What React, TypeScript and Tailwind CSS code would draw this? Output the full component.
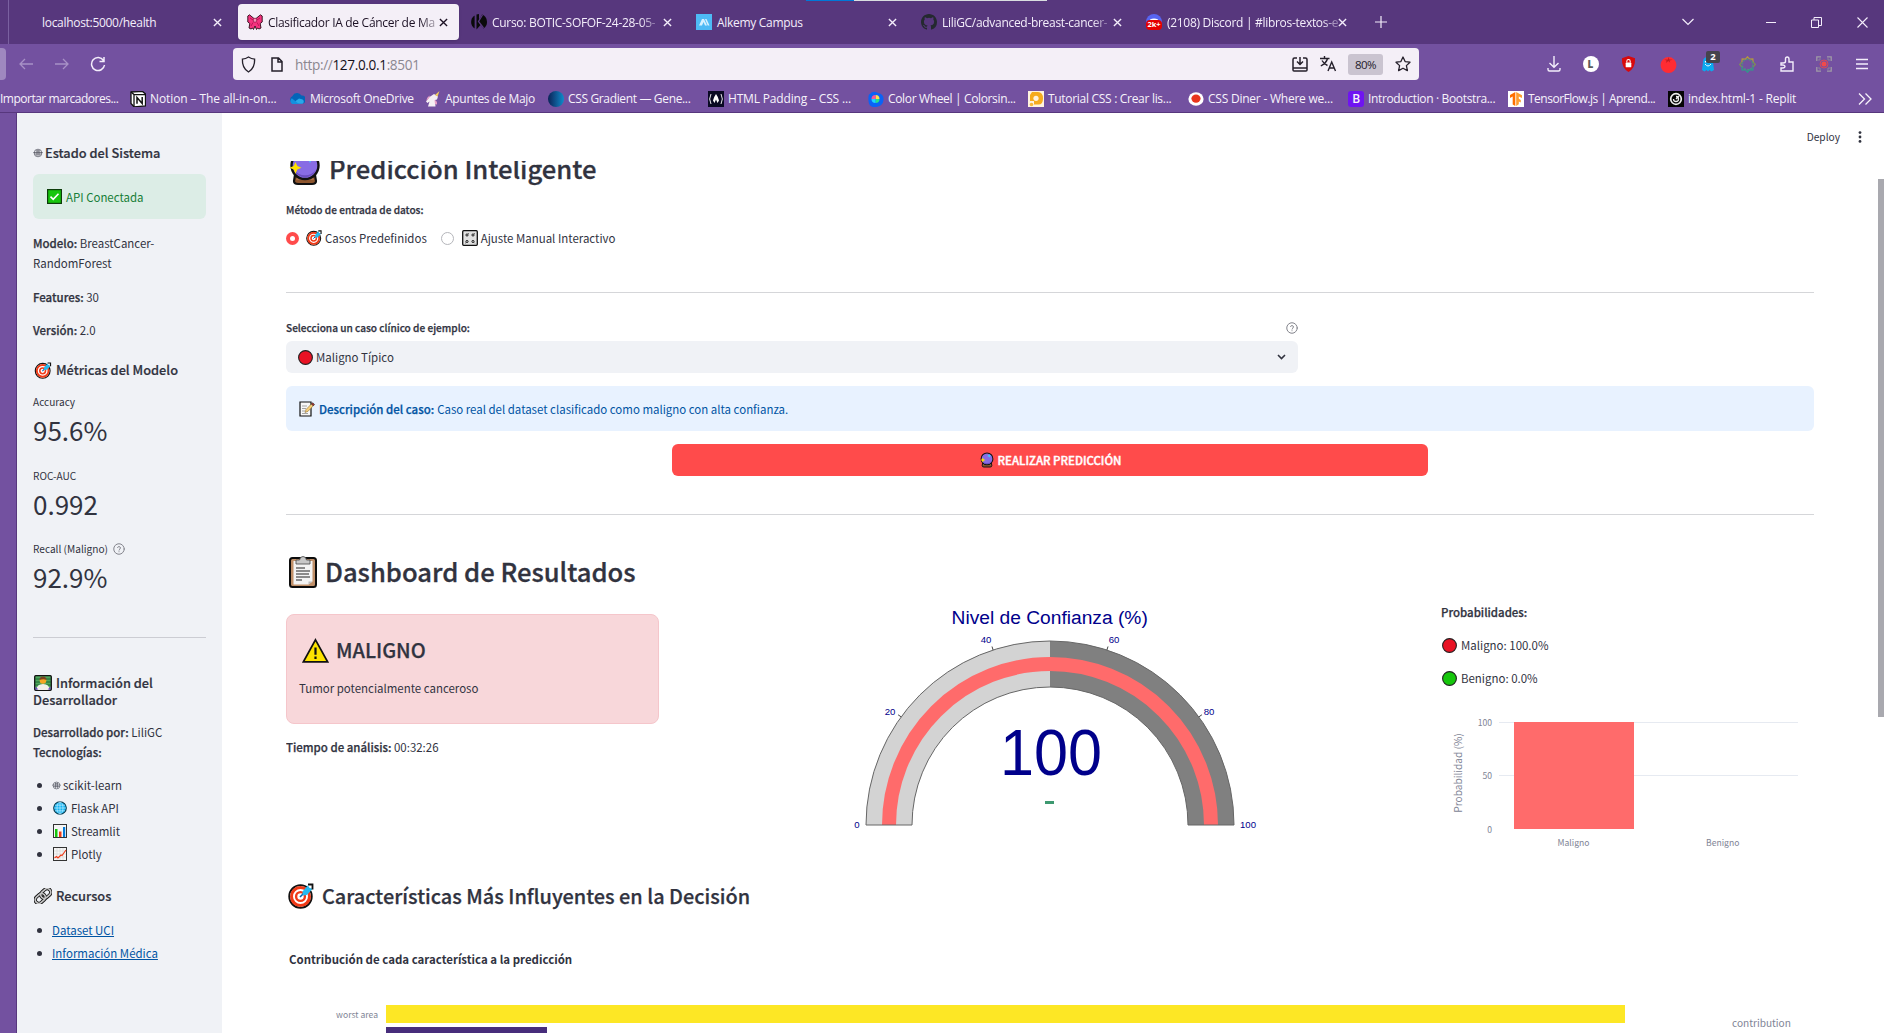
import React from "react";

type IconProps = { className?: string };

/* ---------- pictograms ---------- */

const Target = ({ className = "" }: IconProps) => (
  <svg viewBox="0 0 26 26" className={className}>
    <circle cx="12.5" cy="13.5" r="11.3" fill="#fff" stroke="#111" strokeWidth="1.8" />
    <circle cx="12.5" cy="13.5" r="9" fill="none" stroke="#f03a17" strokeWidth="3" />
    <circle cx="12.5" cy="13.5" r="4.4" fill="#fff" stroke="#f03a17" strokeWidth="2.4" />
    <path d="M12 14l7-7" stroke="#0063b1" strokeWidth="1.6" />
    <path d="M14.5 8.5L20 2.2l1.2 2.6 3.4 1-5.6 6.2-4.2.4z" fill="#26b9ef" />
    <path d="M20 1.5h4.500v5" fill="none" stroke="#111" strokeWidth="1.8" />
  </svg>
);

const CrystalBall = ({ className = "" }: IconProps) => (
  <svg viewBox="0 0 32 36" className={className}>
    <path d="M6 25l-1 6q0 3 4 3h14q4 0 4-3l-1-6z" fill="#8e562e" stroke="#111" strokeWidth="2.2" />
    <path d="M9 27h14l2 2.500H7z" fill="#c98a5a" />
    <circle cx="16" cy="15.5" r="13.5" fill="#886ce4" stroke="#111" strokeWidth="2.4" />
    <path d="M5 20a12 12 0 0022 0 14 14 0 01-22 0z" fill="#6b4fc0" />
    <path d="M21 4l1.400 3.200L26 8.600l-3.600 1.400L21 13l-1.400-3L16 8.600l3.600-1.400z" fill="#3fd0ff" />
    <path d="M6.500 12l1.800 4 4.200 1.800-4.200 1.800-1.800 4.200-1.800-4.200L.5 17.800l4.200-1.800z" fill="#ffe100" />
  </svg>
);

const Clipboard = ({ className = "" }: IconProps) => (
  <svg viewBox="0 0 28 33" className={className}>
    <rect x="1" y="3" width="26" height="29" rx="2.500" fill="#c19069" stroke="#0c0c0c" strokeWidth="2" />
    <path d="M4.500 6h19v20.500l-4 3h-15z" fill="#f4f4f4" />
    <path d="M19.500 29.500v-3h4z" fill="#bbb" />
    <path d="M7 9V5h3.500q.5-3.500 3.500-3.500T17.500 5H21v4z" fill="#c8c8c8" stroke="#444" strokeWidth=".8" />
    <path d="M7 13h9M7 16h14M7 19h13M7 22h14M7 25h6" stroke="#222" strokeWidth="1.100" />
  </svg>
);

const Warning = ({ className = "" }: IconProps) => (
  <svg viewBox="0 0 27 25" className={className}>
    <path d="M13.500 1.800L25.600 23.800H1.400z" fill="#fde300" stroke="#111" strokeWidth="1.700" />
    <path d="M13.500 9.500v7.300M13.500 18.600v2.400" stroke="#111" strokeWidth="2.200" />
  </svg>
);

const Check = ({ className = "" }: IconProps) => (
  <svg viewBox="0 0 15 15" className={className}>
    <rect x=".6" y=".6" width="13.800" height="13.800" fill="#16c60c" stroke="#0d3d0a" strokeWidth="1.200" />
    <path d="M3.500 7.600l2.700 2.700 5.300-5.500" fill="none" stroke="#fff" strokeWidth="1.600" />
  </svg>
);

const Memo = ({ className = "" }: IconProps) => (
  <svg viewBox="0 0 16 16" className={className}>
    <path d="M1 1h11v14H1z" fill="#f7f7f7" stroke="#111" strokeWidth="1.200" />
    <path d="M3 5h5M3 7.500h4M3 10h3M3 12.500h6" stroke="#999" strokeWidth=".9" />
    <path d="M6 11.500l1-3 5.800-6 1.900 1.900-5.800 6z" fill="#f7cf7a" stroke="#7a5b20" strokeWidth=".5" />
    <path d="M12.300 3l1.300-1.300 1.900 1.700-1.400 1.400z" fill="#a33" stroke="#222" strokeWidth=".6" />
  </svg>
);

const Knobs = ({ className = "" }: IconProps) => (
  <svg viewBox="0 0 16 16" className={className}>
    <rect x=".7" y=".7" width="14.600" height="14.600" rx="1" fill="#e2e2e2" stroke="#111" strokeWidth="1.300" />
    <g fill="#ccc" stroke="#222" strokeWidth="1">
      <circle cx="5" cy="5" r="1.100" />
      <circle cx="11" cy="5" r="1.100" />
      <circle cx="5" cy="11.500" r="1.100" />
      <circle cx="11" cy="11.500" r="1.100" />
    </g>
    <path d="M6 4l.8-.8M12 4l.8-.8M4 12.500l-.8.8M12 12.500l.8.8" stroke="#222" strokeWidth=".7" />
  </svg>
);

const Disc = ({ className = "" }: IconProps) => (
  <svg viewBox="0 0 15 15" className={className}>
    <circle cx="7.500" cy="7.500" r="6.900" fill="currentColor" stroke="#222" strokeWidth="1.100" />
  </svg>
);

const Dev = ({ className = "" }: IconProps) => (
  <svg viewBox="0 0 18 16" className={className}>
    <rect x=".7" y=".7" width="16.600" height="14.600" rx="1" fill="#4fa65c" stroke="#111" strokeWidth="1.300" />
    <path d="M1 4h16M1 7h16M1 10h16" stroke="#17602a" strokeWidth=".9" />
    <circle cx="9" cy="5.500" r="3.300" fill="#f5a623" />
    <path d="M5.500 5q0-3.500 3.500-3.500T12.500 5q-3-1.500-7 0z" fill="#7a4320" />
    <path d="M2.500 15q0-6 6.500-6t6.500 6z" fill="#f2efe9" />
    <path d="M1.400 14.500v-3l3 3zM16.600 14.500v-3l-3 3z" fill="#7045c9" />
  </svg>
);

const Globe = ({ className = "" }: IconProps) => (
  <svg viewBox="0 0 14 14" className={className}>
    <circle cx="7" cy="7" r="6.300" fill="#14b5f3" stroke="#0b3a4d" strokeWidth="1.100" />
    <path d="M1 7h12M7 1v12M2 4.200h10M2 9.800h10" stroke="#d6f3ff" strokeWidth=".6" />
    <ellipse cx="7" cy="7" rx="3" ry="6" fill="none" stroke="#d6f3ff" strokeWidth=".6" />
  </svg>
);

const Bars = ({ className = "" }: IconProps) => (
  <svg viewBox="0 0 14 14" className={className}>
    <rect x=".5" y=".5" width="13" height="13" fill="#f5f5f5" stroke="#333" strokeWidth="1" />
    <path d="M2 5h2.500v8H2z" fill="#16c60c" />
    <path d="M6 7.500h2.500V13H6z" fill="#f03a17" />
    <path d="M10 3h2.200v10H10z" fill="#0078d7" />
  </svg>
);

const Trend = ({ className = "" }: IconProps) => (
  <svg viewBox="0 0 14 14" className={className}>
    <rect x=".5" y=".5" width="13" height="13" fill="#f5f5f5" stroke="#333" strokeWidth="1" />
    <path d="M1 4h12M1 7h12M1 10h12M4 1v12M7 1v12M10 1v12" stroke="#cfcfcf" strokeWidth=".5" />
    <path d="M1.500 11l2-1.500L5 11l3-3 1 .5 4-5.500" fill="none" stroke="#f03a17" strokeWidth="1.100" />
  </svg>
);

const Links = ({ className = "" }: IconProps) => (
  <svg viewBox="0 0 18 16" className={className}>
    <g fill="none" transform="rotate(-42 9 8)">
      <rect x="-.2" y="4.400" width="11" height="7.200" rx="3.600" stroke="#111" strokeWidth="3.400" />
      <rect x="7.200" y="4.400" width="11" height="7.200" rx="3.600" stroke="#111" strokeWidth="3.400" />
      <rect x="-.2" y="4.400" width="11" height="7.200" rx="3.600" stroke="#c4c4c4" strokeWidth="1.700" />
      <rect x="7.200" y="4.400" width="11" height="7.200" rx="3.600" stroke="#c4c4c4" strokeWidth="1.700" />
    </g>
  </svg>
);

const Knot = ({ className = "" }: IconProps) => (
  <svg viewBox="0 0 10 10" className={className} fill="none" stroke="#4a4c57" strokeWidth=".7">
    <circle cx="5" cy="5" r="3.800" />
    <path d="M.3 4.500h9.400M1.500 6h7M3.500 3h3M4 2v6M6 2v6" />
  </svg>
);

const Help = ({ className = "" }: IconProps) => (
  <svg viewBox="0 0 24 24" className={className} fill="none" stroke="#83848c" strokeWidth="2" strokeLinecap="round">
    <circle cx="12" cy="12" r="10.500" />
    <path d="M9.100 9a3 3 0 015.800 1c0 2-2.900 2.600-2.900 4.200M12 17.500v.1" />
  </svg>
);

/* ---------- browser window ---------- */

const X = ({ className = "" }: IconProps) => (
  <svg viewBox="0 0 10 10" className={className} fill="none" stroke="currentColor" strokeWidth="1.500">
    <path d="M1 1l8 8M9 1L1 9" />
  </svg>
);

const Ribbon = () => (
  <svg viewBox="0 0 16 16" className="size-4">
    <path d="M7 4.500L2.500.800.8 2v6l2 1.500L2 14l2 1 1.500-1 1 1.500L8 12l1.500 3.500 1-1.500 1.500 1 2-1-.8-4.500 2-1.500V2L13.500.8 9 4.500z" fill="#f5337f" stroke="#2a0a16" strokeWidth=".9" />
    <path d="M3 4l3 2M13 4l-3 2M4 12l2-3.500M12 12l-2-3.500" stroke="#b3124f" strokeWidth=".9" />
    <rect x="6.400" y="4.300" width="3.200" height="3.700" rx=".8" fill="#ff8dbb" stroke="#7d0e38" strokeWidth=".6" />
  </svg>
);
const KIcon = () => (
  <svg viewBox="0 0 16 16" className="size-4">
    <path d="M3.600 1.400A8 8 0 003.600 14.600z" fill="#0a0a0a" />
    <path d="M5.500.5v15l4-4.500 3 3.600A8 8 0 0011 .6L8 6V.1z" fill="#0a0a0a" />
    <path d="M11.500 1l-4 6.500 5 6.500" stroke="#57377d" strokeWidth="1.300" fill="none" />
  </svg>
);
const Alkemy = () => (
  <svg viewBox="0 0 16 16" className="size-4">
    <path d="M0 0h16v16H0z" fill="#4ebaf5" />
    <path d="M3 11.500L6 5h2l3 6.500H9L7.500 8 6 11.500zM9 5h1.500l3 6.500h-1.800z" fill="#d7f1ff" />
  </svg>
);
const Octocat = () => (
  <svg viewBox="0 0 16 16" className="size-4">
    <path fill="#24292f" d="M8 0C3.580 0 0 3.580 0 8c0 3.540 2.290 6.530 5.470 7.590.4.070.55-.17.55-.38 0-.19-.01-.82-.01-1.490-2.010.37-2.530-.49-2.690-.94-.09-.23-.48-.94-.82-1.130-.28-.15-.68-.52-.01-.53.63-.01 1.080.58 1.230.82.72 1.210 1.870.87 2.330.66.07-.52.28-.87.51-1.070-1.780-.2-3.640-.89-3.640-3.950 0-.87.31-1.590.82-2.150-.08-.2-.36-1.020.08-2.120 0 0 .67-.21 2.200.82a7.600 7.600 0 014 0c1.530-1.040 2.200-.82 2.200-.82.44 1.100.16 1.920.08 2.120.51.56.82 1.270.82 2.150 0 3.070-1.870 3.750-3.650 3.950.29.25.54.73.54 1.480 0 1.070-.01 1.930-.01 2.200 0 .21.15.46.55.38A8 8 0 0016 8c0-4.420-3.580-8-8-8z" />
  </svg>
);
const Discord = () => (
  <span className="relative block size-4">
    <svg viewBox="0 0 16 16" className="size-4">
      <circle cx="8" cy="8" r="8" fill="#5865f2" />
      <path d="M4 5.500q4-2 8 0v3H4z" fill="#fff" />
    </svg>
    <span className="absolute inset-x-0 bottom-0 flex h-[10px] items-center justify-center rounded-[4px] bg-[#e50000] text-[7.500px] leading-none font-bold text-white">
      2k+
    </span>
  </span>
);

const tabs: { title: string; icon?: React.ReactNode; active?: boolean; fade?: boolean }[] = [
  { title: "localhost:5000/health" },
  { title: "Clasificador IA de Cáncer de Ma", icon: <Ribbon />, active: true, fade: true },
  { title: "Curso: BOTIC-SOFOF-24-28-05-", icon: <KIcon />, fade: true },
  { title: "Alkemy Campus", icon: <Alkemy /> },
  { title: "LiliGC/advanced-breast-cancer-", icon: <Octocat />, fade: true },
  { title: "(2108) Discord | #libros-textos-e", icon: <Discord />, fade: true },
];

const TabStrip = () => (
  <div className="flex h-11 items-center bg-[#57377d] text-[#f4eefb]">
    <div className="ml-2 h-11 w-[5px] border-l border-[#7a60a0]" />
    {tabs.map((t) => (
      <div
        key={t.title}
        className={
          t.active
            ? "mr-1 flex h-9 w-[221px] items-center rounded bg-[#f4eff7] pl-[9px] text-[#1c1124] shadow"
            : "mr-1 flex h-9 w-[221px] items-center pl-2"
        }
      >
        {t.icon ? t.icon : <span className="w-4" />}
        <span className="ml-[5px] w-[168px] pt-px text-[12px] leading-5 tracking-[-0.3px] whitespace-nowrap">
          <span className={t.fade ? "inline-block [mask-image:linear-gradient(to_right,black_91%,rgba(0,0,0,0.35))]" : ""}>{t.title}</span>
        </span>
        <X className="ml-[3px] size-[9px] shrink-0" />
      </div>
    ))}
    <svg viewBox="0 0 12 12" className="ml-3 size-3" stroke="currentColor" strokeWidth="1.200">
      <path d="M6 0v12M0 6h12" />
    </svg>
    <div className="ml-auto flex items-center pr-4">
      <svg viewBox="0 0 12 8" className="mr-[72px] w-3" fill="none" stroke="currentColor" strokeWidth="1.200">
        <path d="M.5 1L6 6.500 11.500 1" />
      </svg>
      <div className="mr-[35px] h-px w-[10px] bg-current" />
      <svg viewBox="0 0 11 11" className="mr-[35px] size-[11px]" fill="none" stroke="currentColor">
        <path d="M.5 3h7v7.500h-7zM3 3V.5h7.500v8H8" />
      </svg>
      <svg viewBox="0 0 11 11" className="size-[11px]" fill="none" stroke="currentColor" strokeWidth="1.100">
        <path d="M.5.5l10 10M10.500.5l-10 10" />
      </svg>
    </div>
  </div>
);

const Toolbar = () => (
  <div className="flex h-10 items-center text-[#f4eefb]">
    <div className="h-8 w-[6px] rounded-r bg-[#9f88bf]" />
    <svg viewBox="0 0 14 12" className="ml-[13px] w-[14px] text-[#a891c6]" fill="none" stroke="currentColor" strokeWidth="1.300">
      <path d="M14 6H1M6 1L1 6l5 5" />
    </svg>
    <svg viewBox="0 0 14 12" className="ml-[22px] w-[14px] text-[#a891c6]" fill="none" stroke="currentColor" strokeWidth="1.300">
      <path d="M0 6h13M8 1l5 5-5 5" />
    </svg>
    <svg viewBox="0 0 16 16" className="ml-[21px] size-4" fill="none" stroke="currentColor" strokeWidth="1.500">
      <path d="M13.500 4.500A6.500 6.500 0 1014.500 9M14 1v4.500H9.500" />
    </svg>
    <div className="ml-[127px] flex h-8 w-[1186px] items-center rounded bg-[#f4eff7] text-[#25202b]">
      <svg viewBox="0 0 16 18" className="ml-2 h-[17px] w-[15px]" fill="none" stroke="currentColor" strokeWidth="1.400">
        <path d="M8 1q3 2 6.500 2.200Q15 13 8 17 1 13 1.500 3.200 5 3 8 1z" />
      </svg>
      <svg viewBox="0 0 12 15" className="ml-[15px] h-[15px] w-3" fill="none" stroke="currentColor" strokeWidth="1.500">
        <path d="M1 1h6.500L11 4.500V14H1zM7 1v4h4" />
      </svg>
      <span className="mt-[3px] ml-[12px] text-[13.600px] tracking-[-0.35px] whitespace-nowrap text-[#8b8790]">
        http://<span className="text-[#15101a]">127.0.0.1</span>:8501
      </span>
      <div className="ml-auto flex items-center">
        <svg viewBox="0 0 16 15" className="w-4" fill="none" stroke="currentColor" strokeWidth="1.500">
          <path d="M5 1H2.500Q1 1 1 2.500V13q0 1 1 1h12q1 0 1-1V2.500Q15 1 13.500 1H11M8 0v7M5 4.500L8 7.500l3-3M1 11h14" />
        </svg>
        <svg viewBox="0 0 17 16" className="ml-3 w-[17px]" fill="none" stroke="currentColor" strokeWidth="1.400">
          <path d="M0 2.500h9.500M4.500 0v2.500M7.500 2.500Q6.500 7 .8 10M2 4.500Q4 8 7.500 9.500M8 15l3.700-9 3.800 9M9.200 12h5" />
        </svg>
        <span className="ml-[11px] flex h-[21px] w-[35px] items-center justify-center rounded-[3px] bg-[#cac4d0] pt-[2px] text-[11.500px] tracking-[-0.5px]">80%</span>
        <svg viewBox="0 0 16 16" className="mr-[8px] ml-3 size-4" fill="none" stroke="currentColor" strokeWidth="1.300" strokeLinejoin="round">
          <path d="M8 1l2.100 4.600 4.900.6-3.600 3.400 1 5L8 12.200l-4.400 2.400 1-5L1 6.200l4.900-.6z" />
        </svg>
      </div>
    </div>
    <div className="ml-[117px] grid grid-cols-[36px_37px_39px_40px_40px_39.5px_38px_37.5px_38px] items-center justify-items-center">
      <svg viewBox="0 0 14 16" className="w-[14px]" fill="none" stroke="currentColor" strokeWidth="1.400">
        <path d="M7 0v11M2.500 7L7 11.300 11.500 7M1 12v1.500Q1 15 2.500 15h9q1.500 0 1.500-1.500V12" />
      </svg>
      <span className="flex size-4 items-center justify-center rounded-full bg-white text-[10px] font-extrabold text-[#5b5b5b]">L</span>
      <svg viewBox="0 0 16 17" className="w-[15px]">
        <path d="M8 0l7 2.500Q15.500 13 8 17 .5 13 1 2.500z" fill="#d8090c" />
        <rect x="5" y="7" width="6" height="5" rx=".6" fill="#fff" />
        <path d="M6.200 7V5.500a1.800 1.800 0 013.600 0V7" fill="none" stroke="#fff" strokeWidth="1.100" />
      </svg>
      <svg viewBox="0 0 16 16" className="w-[17px]">
        <circle cx="8" cy="8.500" r="7.500" fill="#ff2c33" />
        <path d="M4 3.500l3.500-.3L8 1l.8 2.200 3.200.3-3 .8.600 2-1.800-1.600L5.500 6.500l.8-2.300z" fill="#c01c22" />
      </svg>
      <span className="relative block h-4 w-3">
        <svg viewBox="0 0 12 16" className="w-3">
          <path d="M1 6q0-5 5-5t5 5l1 8-2.500 1.500L7.500 14 6 15.500 4.500 14l-2 1.500L0 14z" fill="#0ca8ee" />
          <path d="M3 8q3 4 6 0" fill="none" stroke="#e8f8ff" strokeWidth="1" />
          <path d="M3.500 5v1.500M8 5v1.500" stroke="#fff" strokeWidth="1.200" />
        </svg>
        <span className="absolute -top-[5px] left-1 flex h-[12px] w-[14px] items-center justify-center rounded-[2px] bg-[#45434c] text-[9.500px] leading-none font-bold text-white">2</span>
      </span>
      <svg viewBox="0 0 16 16" className="w-[17px]" fill="none" strokeWidth="1.200">
        <path d="M2.700 5.700l.3-3 3 .3L8 .8l2 2.200 3-.3.300 3" stroke="#b39a3c" />
        <path d="M13.300 5.700L15.500 8l-2.200 2.200M2.700 10.200L.5 8l2.200-2.300" stroke="#7d8f55" />
        <path d="M13.300 10.200l-.3 3-3-.3L8 15.200l-2-2.300-3 .3-.3-3" stroke="#2f9c8a" />
        <circle cx="8" cy="8" r="4.900" stroke="#4f8f80" strokeDasharray="2 1" />
      </svg>
      <svg viewBox="0 0 14 16" className="w-[14px]" fill="none" stroke="currentColor" strokeWidth="1.400">
        <path d="M1 7h2q2.500 0 2.500-1.500V3q0-2 1.700-2T9 3v3h4v9H1v-3h2q2-.2 2-1.500T3 9H1z" />
      </svg>
      <svg viewBox="0 0 16 16" className="w-4" fill="none" strokeWidth="1.300">
        <path d="M5 .8H.8V5M11 .8h4.200V5M5 15.200H.8V11M11 15.200h4.200V11" stroke="#a09aa6" />
        <path d="M5 3H3v2M11 3h2v2M5 13H3v-2M11 13h2v-2" stroke="#8f8896" strokeWidth=".9" />
        <circle cx="8" cy="8" r="2.500" fill="#f04a4a" />
        <circle cx="8" cy="8" r="4" stroke="#d8485a" strokeWidth="1" />
      </svg>
      <svg viewBox="0 0 12 12" className="w-3" stroke="currentColor" strokeWidth="1.300">
        <path d="M0 1.500h12M0 6h12M0 10.500h12" />
      </svg>
    </div>
  </div>
);

const bookmarks: { label: string; w: string; icon: React.ReactNode }[] = [
  {
    label: "Notion – The all-in-on...",
    w: "w-[159px] tracking-[-0.1px]",
    icon: (
      <svg viewBox="0 0 16 16" className="size-4">
        <path d="M1 1l11.500-.6L15.500 3v12L4 15.800 1 12.500z" fill="#fff" stroke="#111" strokeWidth="1.300" />
        <path d="M1 1l3 2.600h11.500M4 3.600v12" stroke="#111" strokeWidth="1.300" fill="none" />
        <path d="M7 12.800V6.500l5.200 6V6" stroke="#111" strokeWidth="1.500" fill="none" />
      </svg>
    ),
  },
  {
    label: "Microsoft OneDrive",
    w: "w-[136px] tracking-[-0.28px]",
    icon: (
      <svg viewBox="0 0 16 16" className="mr-px size-4">
        <path d="M4 12.500a4 4 0 01-.5-7.500 5 5 0 019-.5 4 4 0 01.5 8z" fill="#0364b8" />
        <path d="M3 12.800l7-5.300 3 .7a2.500 2.500 0 01.5 4.600z" fill="#28a8ea" />
        <path d="M3.300 13a3.500 3.500 0 01-.5-5.800L10 13z" fill="#1490df" />
      </svg>
    ),
  },
  {
    label: "Apuntes de Majo",
    w: "w-[123px] tracking-[-0.3px]",
    icon: (
      <svg viewBox="0 0 16 16" className="size-4">
        <path d="M3 15.500l1.500-5-2 1.500-1.500-1.500L4.500 6 9 3l4 2.500-1 3-2 .5.500 6.500z" fill="#f5eff3" />
        <path d="M10 4L14.500 0 12.500 5.500z" fill="#f5cf5c" />
        <path d="M5 4.500Q1.500 6 1.500 10L4 7zM9.500 9q3 .5 2.500 4.500L10 13z" fill="#e8a0c8" />
      </svg>
    ),
  },
  {
    label: "CSS Gradient — Gene...",
    w: "w-[160px]",
    icon: <span className="block size-4 rounded-full bg-linear-to-r from-[#0b2358] to-[#0d8ccc]" />,
  },
  {
    label: "HTML Padding – CSS ...",
    w: "w-[160px] tracking-[-0.17px]",
    icon: (
      <svg viewBox="0 0 16 16" className="size-4">
        <path d="M0 0h16v16H0z" fill="#0a0a23" />
        <path d="M3 3Q.3 8 3 13M13 3q2.700 5 0 10" fill="none" stroke="#fff" strokeWidth=".9" />
        <path d="M8 3q2.500 3.500 3 6.500L9.500 12 8 8.500 6.500 12 5 9.500Q5.500 6.500 8 3z" fill="#fff" />
      </svg>
    ),
  },
  {
    label: "Color Wheel | Colorsin...",
    w: "w-[160px]",
    icon: (
      <svg viewBox="0 0 16 16" className="size-4">
        <path d="M2 3q3-4 8-1 6 1 5.500 7T8 16 .5 10 2 3z" fill="#0a62f5" />
        <path d="M7.500 8V4A4 4 0 0111.500 8z" fill="#ffe14a" />
        <path d="M7.500 8h4a4 4 0 01-4 4z" fill="#25e08a" />
        <path d="M7.500 8v4a4 4 0 01-4-4z" fill="#1bd3ff" />
        <path d="M7.500 8h-4a4 4 0 014-4z" fill="#f7579b" />
      </svg>
    ),
  },
  {
    label: "Tutorial CSS : Crear lis...",
    w: "w-[160px] tracking-[-0.3px]",
    icon: (
      <svg viewBox="0 0 16 16" className="size-4">
        <path d="M0 0h16v16H0z" fill="#fff3df" />
        <path d="M4 1h6q5 0 5 6.500T10 13.500H6V10H2V4z" fill="#f6ab1e" />
        <circle cx="8" cy="7.300" r="2.600" fill="#fff3df" />
        <circle cx="3.500" cy="13.500" r="1.800" fill="#f8b93a" />
      </svg>
    ),
  },
  {
    label: "CSS Diner - Where we...",
    w: "w-[160px] tracking-[-0.23px]",
    icon: (
      <svg viewBox="0 0 16 16" className="size-4">
        <ellipse cx="8" cy="8" rx="7.600" ry="6.800" fill="#fff" />
        <ellipse cx="8" cy="7.600" rx="4.600" ry="4.200" fill="#e9351c" />
      </svg>
    ),
  },
  {
    label: "Introduction · Bootstra...",
    w: "w-[160px]",
    icon: <span className="flex size-4 items-center justify-center rounded-[3px] bg-[#6f14f2] text-[12px] leading-none font-semibold">B</span>,
  },
  {
    label: "TensorFlow.js | Aprend...",
    w: "w-[160px] tracking-[-0.5px]",
    icon: (
      <svg viewBox="0 0 16 16" className="size-4">
        <path d="M0 0h16v16H0z" fill="#fff" />
        <path d="M7.300 1v14l-2.600-1.500V5.500L2 7V4z" fill="#ff6f00" />
        <path d="M8.200 1L14 4.200V7l-3.200-1.600v2.400l2 1.200v2.600l-2-1.200v2.800L8.200 15z" fill="#ff9d2e" />
      </svg>
    ),
  },
  {
    label: "index.html-1 - Replit",
    w: "w-[160px] tracking-[-0.2px]",
    icon: (
      <svg viewBox="0 0 16 16" className="size-4">
        <path d="M0 0h16v16H0z" fill="#050505" />
        <circle cx="8" cy="8" r="5.300" fill="none" stroke="#eee" strokeWidth="1.700" />
        <path d="M8 5.500a2.500 2.500 0 11-2.500 2.500M8 8l3-3" fill="none" stroke="#eee" strokeWidth="1.300" />
      </svg>
    ),
  },
];

const Bookmarks = () => (
  <div className="flex h-[28px] items-center border-b border-[#57377d] text-[12px] tracking-[-0.35px] whitespace-nowrap text-[#f7f3fb]">
    <span className="w-[130px] shrink-0 tracking-[-0.5px]">Importar marcadores...</span>
    {bookmarks.map((b) => (
      <span key={b.label} className={"flex shrink-0 items-center gap-1 " + b.w}>
        <span className="shrink-0">{b.icon}</span>
        {b.label}
      </span>
    ))}
    <svg viewBox="0 0 14 12" className="ml-[30px] w-[14px] shrink-0" fill="none" stroke="currentColor" strokeWidth="1.300">
      <path d="M1 .5L6.500 6 1 11.500M7.500.5L13 6l-5.500 5.500" />
    </svg>
  </div>
);

/* ---------- sidebar ---------- */

const Strong = ({ children }: { children: React.ReactNode }) => (
  <b className="font-medium [-webkit-text-stroke:0.25px]">{children}</b>
);

const SideHeading = ({ className = "", icon, children }: { className?: string; icon: React.ReactNode; children: React.ReactNode }) => (
  <h3 className={"flex h-5 items-center text-[12.800px] font-medium [-webkit-text-stroke:0.2px] " + className}>
    {icon}
    {children}
  </h3>
);

const Metric = ({ label, value, help }: { label: string; value: string; help?: boolean }) => (
  <div className="h-[73.500px]">
    <div className="flex h-5 items-center text-[10.100px]">
      {label}
      {help && <Help className="ml-[5px] size-3" />}
    </div>
    <div className="h-9 text-[26px] leading-9">{value}</div>
  </div>
);

const Item = ({ icon, children }: { icon?: React.ReactNode; children: React.ReactNode }) => (
  <li className="flex h-[23px] items-center">
    <span className="ml-1 size-[5px] rounded-full bg-[#31333f]" />
    <span className="ml-[10px] flex items-center">
      {icon}
      {children}
    </span>
  </li>
);

const Sidebar = () => (
  <aside className="w-[205px] shrink-0 bg-[#f0f2f6] px-4 pt-[30px] text-[11.460px] leading-5 whitespace-nowrap">
    <SideHeading icon={<Knot className="mr-[2px] w-[10px]" />}>Estado del Sistema</SideHeading>
    <div className="mt-[11px] flex h-[45px] items-center rounded-md bg-[#dcede6] pl-[14px] text-[#177e37]">
      <Check className="mr-1 size-[15px]" />
      API Conectada
    </div>
    <p className="mt-[14px]">
      <Strong>Modelo:</Strong> BreastCancer-
      <br />
      RandomForest
    </p>
    <p className="mt-[14px]">
      <Strong>Features:</Strong> 30
    </p>
    <p className="mt-[13px]">
      <Strong>Versión:</Strong> 2.0
    </p>
    <SideHeading className="mt-5 mb-3" icon={<Target className="mr-[4px] ml-[1px] h-[17px] w-[18px]" />}>
      Métricas del Modelo
    </SideHeading>
    <Metric label="Accuracy" value="95.6%" />
    <Metric label="ROC-AUC" value="0.992" />
    <Metric label="Recall (Maligno)" value="92.9%" help />
    <hr className="mt-[24px] border-[#cccdd3]" />
    <h3 className="mt-9 text-[12.800px] leading-[17px] font-medium [-webkit-text-stroke:0.2px]">
      <Dev className="mr-1 ml-[1px] inline-block h-4 w-[18px] align-[-3px]" />
      Información del
      <br />
      Desarrollador
    </h3>
    <p className="mt-[14px]">
      <Strong>Desarrollado por:</Strong> LiliGC
      <br />
      <Strong>Tecnologías:</Strong>
    </p>
    <ul className="mt-[12px]">
      <Item icon={<Knot className="mr-[2px] w-[9px]" />}>scikit-learn</Item>
      <Item icon={<Globe className="mr-1 ml-[1px] size-[14px]" />}>Flask API</Item>
      <Item icon={<Bars className="mr-1 ml-[1px] size-[14px]" />}>Streamlit</Item>
      <Item icon={<Trend className="mr-1 ml-[1px] size-[14px]" />}>Plotly</Item>
    </ul>
    <SideHeading className="mt-5" icon={<Links className="mr-[4px] ml-[1px] h-4 w-[18px]" />}>
      Recursos
    </SideHeading>
    <ul className="mt-[13px] text-[#0054a3]">
      <Item>
        <a className="underline">Dataset UCI</a>
      </Item>
      <Item>
        <a className="underline">Información Médica</a>
      </Item>
    </ul>
  </aside>
);

/* ---------- charts ---------- */

const ticks: [number, number, string][] = [
  [17, 223, "0"],
  [50, 110, "20"],
  [146, 38, "40"],
  [274, 38, "60"],
  [369, 110, "80"],
  [408, 223, "100"],
];

const Gauge = () => (
  <svg viewBox="0 0 430 240" className="ml-[181px] h-[240px] w-[430px] shrink-0 font-['Liberation_Sans',Arial,sans-serif]">
    <path d="M26 223A184 184 0 01210 39V85A138 138 0 0072 223z" fill="#d3d3d3" />
    <path d="M394 223A184 184 0 00210 39V85A138 138 0 01348 223z" fill="#808080" />
    <path d="M49 223A161 161 0 01371 223" fill="none" stroke="#ff6b6b" strokeWidth="14" />
    <path d="M26 223A184 184 0 01394 223H348A138 138 0 0072 223z" fill="none" stroke="#666" strokeWidth="1" />
    <path d="M61.100 114.800l-3-2M153.100 48l-1.100-3.500M266.900 48l1.100-3.500M358.900 114.800l3-2" stroke="#444" strokeWidth="1" />
    <g fill="#00008b" textAnchor="middle">
      <text x="209.700" y="22" fontSize="19.200">Nivel de Confianza (%)</text>
      {ticks.map(([x, y, label]) => (
        <text key={label} x={x} y={y + 3.300} fontSize="9.600">{label}</text>
      ))}
      <text x="211" y="172.500" fontSize="64" textLength="102" lengthAdjust="spacingAndGlyphs">100</text>
    </g>
    <rect x="205" y="199" width="9" height="3" fill="#3d9970" />
  </svg>
);

const Probabilities = () => (
  <svg viewBox="0 0 373 150" className="h-[150px] w-[373px] text-[#808495]">
    <path d="M58 21.500h299M58 74.500h299" stroke="#e6eaf1" />
    <rect x="73" y="21" width="120" height="107" fill="#ff6b6b" />
    <g fill="currentColor" fontSize="8.600">
      <text x="51" y="25" textAnchor="end">100</text>
      <text x="51" y="78" textAnchor="end">50</text>
      <text x="51" y="131.500" textAnchor="end">0</text>
      <text x="132.500" y="145" textAnchor="middle">Maligno</text>
      <text x="281.700" y="145" textAnchor="middle">Benigno</text>
      <text transform="translate(20.500 72) rotate(-90)" fontSize="10.100" textAnchor="middle">Probabilidad (%)</text>
    </g>
  </svg>
);

/* ---------- main panel ---------- */

const Main = () => (
  <main className="relative flex min-w-0 flex-1 flex-col bg-white pl-16 text-[11.460px] leading-5 whitespace-nowrap">
    <header className="flex h-12 shrink-0 items-center justify-end pr-[22px] pb-px text-[10.200px]">
      Deploy
      <svg viewBox="0 0 4 12" className="ml-[18px] h-3 w-1" fill="#31333f">
        <circle cx="2" cy="1.600" r="1.400" />
        <circle cx="2" cy="6" r="1.400" />
        <circle cx="2" cy="10.400" r="1.400" />
      </svg>
    </header>
    <div className="w-[1528px] flex-1 overflow-hidden">
      <h2 className="-mt-[11px] flex h-[35px] items-center text-[25.600px] font-medium [-webkit-text-stroke:0.3px]">
        <CrystalBall className="mr-2 ml-[3px] h-9 w-8" />
        Predicción Inteligente
      </h2>
      <p className="mt-[15px] text-[10.100px] font-medium [-webkit-text-stroke:0.25px]">Método de entrada de datos:</p>
      <div className="mt-2 flex h-5 items-center">
        <span className="flex size-[13px] items-center justify-center rounded-full bg-[#ff4b4b]">
          <span className="size-[5px] rounded-full bg-white" />
        </span>
        <Target className="mr-[3px] ml-[7px] size-4" />
        Casos Predefinidos
        <span className="ml-[14px] size-[13px] rounded-full border border-[#b5b6bb]" />
        <Knobs className="mr-[3px] ml-[8px] size-4" />
        Ajuste Manual Interactivo
      </div>
      <hr className="mt-[44px] border-[#d5d6d9]" />
      <div className="mt-[25px] flex w-[1012px] items-center justify-between text-[10.100px] font-medium [-webkit-text-stroke:0.25px]">
        Selecciona un caso clínico de ejemplo:
        <Help className="size-3" />
      </div>
      <div className="mt-[3px] flex h-8 w-[1012px] items-center rounded-md bg-[#f0f2f6] pr-3 pl-3">
        <Disc className="mr-[3px] size-[15px] text-[#e81224]" />
        Maligno Típico
        <svg viewBox="0 0 9 6" className="ml-auto w-[9px]" fill="none" stroke="#31333f" strokeWidth="1.600">
          <path d="M1 1l3.500 3.500L8 1" />
        </svg>
      </div>
      <div className="mt-[13px] flex h-[45px] items-center rounded-md bg-[#e8f2ff] pl-[13px] text-[#0054a3]">
        <Memo className="mr-1 size-4" />
        <span className="mr-[3px]">
          <Strong>Descripción del caso:</Strong>
        </span>
        Caso real del dataset clasificado como maligno con alta confianza.
      </div>
      <button className="mt-[13px] ml-[386px] flex h-8 w-[756px] items-center justify-center rounded-md bg-[#ff4b4b] pl-px font-medium text-white [-webkit-text-stroke:0.4px]">
        <CrystalBall className="mr-1 h-4 w-[14px]" />
        REALIZAR PREDICCIÓN
      </button>
      <hr className="mt-[38px] border-[#d5d6d9]" />
      <h2 className="mt-[38px] flex h-9 items-center text-[25.600px] font-medium [-webkit-text-stroke:0.3px]">
        <Clipboard className="mr-2 ml-[3px] h-[33px] w-7" />
        Dashboard de Resultados
      </h2>
      <section className="mt-[13px] flex h-[264px]">
        <div className="w-[373px] shrink-0 pt-3">
          <div className="h-[110px] rounded-lg border border-[#f5c6cb] bg-[#f8d7da] pt-5 pl-3">
            <h3 className="flex h-[30px] items-center text-[19.900px] font-medium [-webkit-text-stroke:0.25px]">
              <Warning className="mr-[7px] ml-[3px] h-[25px] w-[27px]" />
              MALIGNO
            </h3>
            <p className="mt-[13px]">Tumor potencialmente canceroso</p>
          </div>
          <p className="mt-[13px]">
            <Strong>Tiempo de análisis:</Strong> 00:32:26
          </p>
        </div>
        <Gauge />
        <div className="ml-[171px] w-[373px]">
          <p>
            <Strong>Probabilidades:</Strong>
          </p>
          <p className="mt-[13px] flex h-5 items-center">
            <Disc className="mr-1 ml-[1px] size-[15px] text-[#e81224]" />
            Maligno: 100.0%
          </p>
          <p className="mt-[13px] mb-[13px] flex h-5 items-center">
            <Disc className="mr-1 ml-[1px] size-[15px] text-[#16c60c]" />
            Benigno: 0.0%
          </p>
          <Probabilities />
        </div>
      </section>
      <h3 className="mt-3 flex h-9 items-center text-[19.900px] font-medium [-webkit-text-stroke:0.25px]">
        <Target className="mr-[8px] ml-[2px] size-[26px]" />
        Características Más Influyentes en la Decisión
      </h3>
      <p className="mt-[35px] ml-[3px] text-[11.460px] font-bold">Contribución de cada característica a la predicción</p>
      <div className="mt-9 flex">
        <div className="w-[100px] pr-2 text-right text-[8.600px] leading-[18px] text-[#808495]">worst area</div>
        <div>
          <div className="h-[18px] w-[1239px] bg-[#fde725]" />
          <div className="mt-1 h-[18px] w-[161px] bg-[#472d7b]" />
        </div>
        <div className="mt-2 ml-[107px] text-[10.100px] text-[#808495]">contribution</div>
      </div>
    </div>
    <div className="absolute top-[66px] right-0 h-[538px] w-[6px] bg-[#a9a9af]" />
  </main>
);

export default function App() {
  return (
    <div className="relative flex h-[1033px] w-[1884px] flex-col overflow-hidden bg-[#7351a0] font-['Open_Sans','Noto_Sans',sans-serif]">
      <div className="absolute top-0 left-[806px] flex">
        <div className="h-px w-12 bg-[#0078d7]" />
        <div className="h-px w-[193px] bg-[#d9dde0]" />
      </div>
      <TabStrip />
      <Toolbar />
      <div className="h-px" />
      <Bookmarks />
      <div className="flex min-h-0 flex-1 font-['Noto_Sans_CJK_JP','Noto_Sans',sans-serif] text-[#31333f]">
        <div className="w-[17px] shrink-0 border-r border-[#57377d]" />
        <Sidebar />
        <Main />
      </div>
    </div>
  );
}
